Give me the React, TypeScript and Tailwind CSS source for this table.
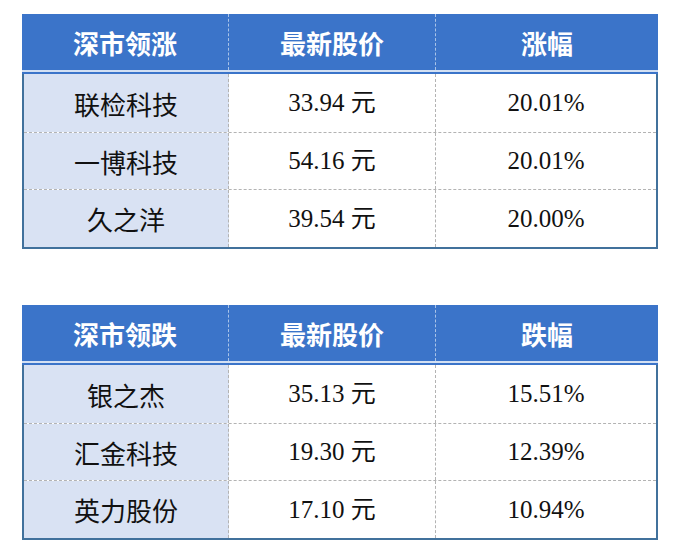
const gainers = [
  { name: "联检科技", price: "33.94 元", pct: "20.01%" },
  { name: "一博科技", price: "54.16 元", pct: "20.01%" },
  { name: "久之洋", price: "39.54 元", pct: "20.00%" },
];

const losers = [
  { name: "银之杰", price: "35.13 元", pct: "15.51%" },
  { name: "汇金科技", price: "19.30 元", pct: "12.39%" },
  { name: "英力股份", price: "17.10 元", pct: "10.94%" },
];

interface Row {
  name: string;
  price: string;
  pct: string;
}

const StockTable = ({ title, pctLabel, rows }: { title: string; pctLabel: string; rows: Row[] }) => {
  const rowHeights = ["h-[59px]", "h-[57px]", "h-[57px]"];
  return (
    <div className="w-[636px]">
      {/* header */}
      <div className="grid grid-cols-[207px_207px_222px] h-[56px] bg-[#3b74c9] text-white text-[26px] font-bold font-['Noto_Sans_CJK_SC',sans-serif]">
        <div className="flex items-center justify-center border-r border-dashed border-[#a9c3e8]">{title}</div>
        <div className="flex items-center justify-center border-r border-dashed border-[#a9c3e8]">最新股价</div>
        <div className="flex items-center justify-center">{pctLabel}</div>
      </div>
      <div className="h-[2px] bg-[#d3e0f3]" />
      <div className="h-[2px] bg-[#3b74c9]" />
      {/* body */}
      <div className="border-x-2 border-b-2 border-[#41719c] text-[25px] text-[#111] font-['Liberation_Serif','Noto_Sans_CJK_SC',serif]">
        {rows.map((r, i) => (
          <div
            key={r.name}
            className={`grid grid-cols-[205px_207px_220px] ${rowHeights[i]} ${i < rows.length - 1 ? "border-b border-dashed border-[#b3b3b3]" : ""}`}
          >
            <div className="flex items-center justify-center bg-[#d9e2f3] border-r border-dashed border-[#b3b3b3] text-[26px] font-['Noto_Sans_CJK_SC',sans-serif]">
              {r.name}
            </div>
            <div className="flex items-center justify-center border-r border-dashed border-[#b3b3b3]">{r.price}</div>
            <div className="flex items-center justify-center">{r.pct}</div>
          </div>
        ))}
      </div>
    </div>
  );
};

export default function App() {
  return (
    <div className="w-[690px] h-[558px] bg-white pt-[14px] pl-[22px]">
      <StockTable title="深市领涨" pctLabel="涨幅" rows={gainers} />
      <div className="h-[56px]" />
      <StockTable title="深市领跌" pctLabel="跌幅" rows={losers} />
    </div>
  );
}
